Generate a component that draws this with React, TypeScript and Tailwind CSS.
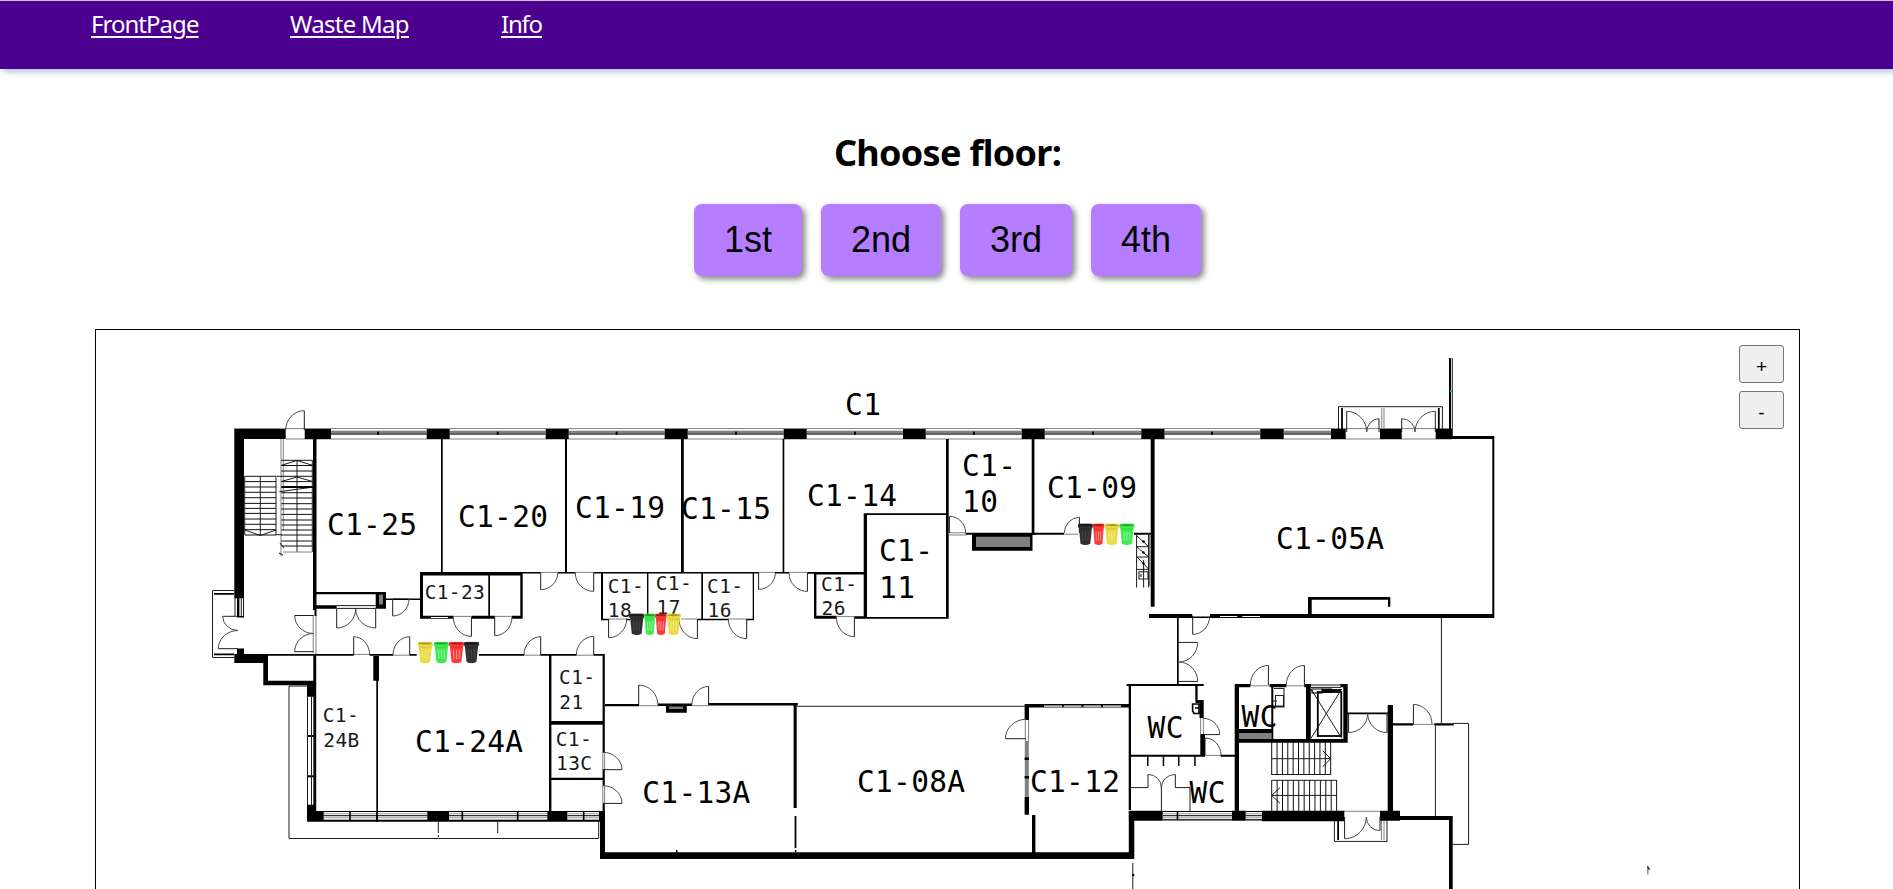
import React from "react";

type Box = [number, number, number, number];
type Swing = [number, number, number, number, number, number];

const INK = "#000000";
const GREY = "#808080";

/* Walls, given as left, top, right, bottom. */
const walls: Box[] = [
  // north facade piers
  [234.3, 429, 285.7, 439], [304.7, 429, 331, 439], [426.7, 429, 449.7, 439], [545.7, 429, 568.7, 439],
  [664.7, 429, 687.7, 439], [783.7, 429, 806.7, 439], [903, 429, 925.7, 439], [1021.7, 429, 1044.7, 439],
  [1141.3, 429, 1164.5, 439], [1260.3, 429, 1283.7, 439], [1331, 429, 1345.7, 439], [1380, 429, 1401.7, 439],
  [1435.7, 429, 1452.7, 439], [1452, 436, 1494.3, 439], [1492.3, 436, 1494.3, 618], [1149, 614, 1494.3, 618],
  [1449, 358, 1451, 429],
  // west wall and entrance
  [234.3, 429, 244, 598.3], [237, 598, 239.4, 616], [237, 616, 244, 617.5], [237, 648.5, 244, 654],
  [234.3, 654, 268, 663], [263.3, 654, 268, 685.3], [263.3, 680.7, 316, 685.3], [313.3, 655, 316, 683],
  [313, 439, 316.5, 610], [314.5, 609, 316.5, 616],
  // room partitions
  [441, 439, 442.7, 573], [565, 439, 567, 573], [681, 439, 683.8, 573], [782.6, 439, 784.3, 573],
  [946, 439, 948.7, 618.7], [1031.7, 439, 1034.4, 535], [1150.7, 439, 1154.6, 606.7],
  // service strip
  [316, 592, 386, 594.3], [375.7, 592, 386, 608.7], [316, 605.3, 336.7, 608.7], [386, 598.4, 420, 600],
  [420, 572, 522.7, 575.6], [420, 572, 423, 618.7], [520.3, 572, 522.7, 618.7], [488.3, 574, 490, 618],
  [420, 615.7, 453.3, 618.7], [471.7, 615.7, 494.7, 618.7], [512, 615.7, 522.7, 618.7],
  [522, 572, 540.7, 573.5], [557.7, 572, 575.3, 573.5], [593.7, 572, 758.7, 573.5], [775, 572, 789, 573.5], [807.3, 572, 864, 573.7],
  [601, 573, 603, 620.3], [647, 573, 648.4, 614], [701.3, 573, 703, 620], [752.7, 573, 754, 620],
  [601, 618.7, 609, 620.3], [626, 618.7, 630, 620.3], [697.3, 618.7, 728.3, 620.3], [746.7, 618.7, 754, 620.3],
  [814, 572.3, 816.4, 618.7], [814, 572.3, 866, 574.4], [814, 615.7, 836.3, 618.7], [854.7, 616.3, 866, 618.7],
  [863.7, 513.3, 867, 618.7], [863.7, 513.3, 948, 515], [863.7, 617, 948.7, 618.7],
  [965.7, 532.7, 1064, 534.7], [1134, 532.7, 1151, 534.7], [972, 533, 1032.5, 550.7],
  // corridor south side
  [268, 654, 353.7, 655.8], [369.7, 654, 393, 655.8], [409.7, 654, 416.7, 655.8], [479, 654, 524, 655.8],
  [540.7, 654, 576.3, 655.8], [593.7, 654, 604.8, 655.8], [313.6, 656, 316.2, 812],
  [373.3, 656, 379, 680.7], [376.3, 680, 378, 822], [549, 655, 551.4, 812], [602.6, 654, 604.8, 752.3],
  [602.6, 769.7, 604.8, 785.7], [602.6, 803.3, 604.8, 812], [551, 721, 603, 724.7], [551, 777.7, 603, 780],
  [307, 685, 316, 696.7], [307, 804.7, 316, 812], [307, 811, 323.7, 821.7], [427.3, 811, 449, 821.7], [547.3, 811, 567.3, 821.7],
  [599, 811, 605, 821.7], [307, 820.3, 600, 821.8], [307, 811, 600, 812],
  // lower rooms
  [605, 704, 639, 706.3], [658, 703.6, 692, 706], [708.6, 703, 797.8, 705.5], [666, 705, 686.8, 712.7],
  [793.6, 705, 796.7, 808], [794.6, 816, 796.4, 848], [794.8, 850, 796.4, 852], [676, 850, 677.4, 852.5],
  [600, 811, 605, 859], [600, 852.3, 1134.3, 859], [1128.8, 820, 1134.3, 859],
  [1024.6, 704, 1129.3, 707.6], [1024.6, 704, 1029, 720], [1024.6, 796.7, 1029, 814.7], [1032, 815, 1035.4, 853],
  [1128.7, 684, 1131, 810],
  // toilets
  [1126.7, 684, 1203.7, 686], [1195.3, 686, 1197.6, 700], [1195.5, 700, 1203.7, 703], [1199.5, 700, 1203.7, 718],
  [1200.3, 734, 1205, 756], [1131, 754.7, 1205, 756.7], [1220.7, 754.7, 1236, 756.7],
  [1147, 756, 1148.5, 766], [1162.7, 756, 1164.2, 766], [1178, 756, 1179.5, 766], [1194.2, 756, 1195.7, 766],
  [1177, 618, 1178.7, 684], [1128.7, 810.7, 1162.7, 820.7], [1232, 810.7, 1245.7, 820.7],
  [1262, 810.7, 1344.3, 821.3], [1380, 810.7, 1400, 820.7], [1400, 816, 1452.5, 820], [1449, 816, 1452.7, 889],
  [1234.7, 684, 1239, 811], [1234.7, 684, 1250.3, 687.2], [1269.7, 684, 1286.3, 687.2], [1304.3, 684, 1311, 687.2],
  [1340.5, 684, 1347.7, 687.2], [1271.3, 687, 1273.3, 740], [1306, 684, 1310.8, 740], [1343.3, 684, 1347.7, 742.6],
  [1239, 739, 1347.7, 742.7], [1239, 729, 1272, 733], [1322, 688.5, 1332, 693],
  [1347, 712.4, 1388, 714.2], [1387.7, 705, 1393, 811], [1393, 723.2, 1413.3, 725.6], [1434.3, 723.2, 1453.7, 725.6],
  [1308, 597, 1390.3, 599.7], [1308, 597, 1311.7, 616], [1388, 597, 1390.3, 606.7],
];

const greys: Box[] = [
  [379, 594.5, 383, 604.5], [976, 536.7, 1030, 547], [1239, 733, 1271.3, 739], [669, 706.5, 683, 709],
  [1024.8, 741, 1028.8, 796.7], [1148.3, 535, 1150.6, 586],
];

const whites: Box[] = [
  [1192.3, 614, 1210, 616.4], [1220, 616, 1237.3, 617], [1242.3, 616, 1260, 617], [431, 617, 448, 618],
  [1044, 705.6, 1062, 706.7], [1063.8, 705.6, 1081.6, 706.7], [1083.5, 705.6, 1101, 706.7], [1103, 705.6, 1121, 706.7],
];

/* Window bays of the north facade. */
const bays: [number, number, number | null][] = [
  [331, 426.7, 378], [449.7, 545.7, 497.7], [568.7, 664.7, 616.7], [687.7, 783.7, 736], [806.7, 903, 855],
  [925.7, 1021.7, 974], [1044.7, 1141.3, 1093], [1164.5, 1260.3, 1212], [1283.7, 1331, null],
];

/* Window bays of the south facade. */
const southBays: Box[] = [
  [323.7, 811, 427.3, 821], [449, 811, 547.3, 821], [567.3, 811, 599, 821], [1162.7, 811, 1232, 820.5], [1245.7, 811, 1262, 820.5],
];

/* Thin lines: x1, y1, x2, y2. */
const thin: Box[] = [
  [1452.3, 358, 1452.3, 429],
  [1338.5, 429, 1338.5, 406.7], [1338.5, 406.7, 1442.4, 406.7], [1442.4, 406.7, 1442.4, 429],
  [234, 590.5, 212.5, 590.5], [212.5, 590.5, 212.5, 657.5], [212.5, 657.5, 234, 657.5],
  [235, 598, 235, 616], [241.3, 598, 241.3, 616], [243.5, 598, 243.5, 616],
  [276, 476.3, 276, 535], [277, 476.3, 282, 476.3], [244.7, 476.3, 244.7, 535], [260.3, 476.3, 260.3, 535],
  [297, 460.3, 297, 552], [312.3, 460, 312.3, 552], [276, 534.7, 282, 534.7],
  [336.7, 605.6, 375.7, 605.6], [336.7, 608.4, 375.7, 608.4],
  [307.5, 696, 307.5, 805], [311.5, 696, 311.5, 805], [314, 696, 314, 805],
  [289, 686, 307, 686], [289, 686, 289, 838.5], [289, 838.5, 598.7, 838.5], [598.7, 838.5, 598.7, 821],
  [438.3, 822, 438.3, 833], [438.3, 835, 438.3, 837], [497.7, 822, 497.7, 833],
  [797, 706.3, 1025, 706.3], [1441.4, 618, 1441.4, 723.3],
  [1453, 723.4, 1468.6, 723.4], [1468.6, 723.4, 1468.6, 844.4], [1468.6, 844.4, 1452, 844.4], [1435.4, 725, 1435.4, 816],
  [1334.4, 821, 1334.4, 841.4], [1334.4, 841.4, 1387, 841.4], [1387, 841.4, 1387, 820],
  [1132.8, 863, 1132.8, 889], [1136.6, 535, 1136.6, 587.5], [1143.6, 560, 1143.6, 587.5], [1148.6, 535, 1148.6, 587.5],
  [1136.6, 546.7, 1149, 546.7], [1136.6, 557, 1149, 557], [1136.6, 569.4, 1149, 569.4],
  [1137, 536, 1148.6, 546.6], [1137, 547, 1148.6, 557], [1137, 557, 1148.6, 569],
  [1131, 787.6, 1148, 787.6], [1175.3, 787.6, 1190, 787.6], [1161.4, 786, 1161.4, 811], [1190, 787.6, 1190, 811],
  [1311, 685, 1341, 685], [1311, 687.4, 1341, 687.4], [1311, 689, 1341.7, 738.3], [1341.7, 689, 1311, 738.3],
  [1271.7, 774.5, 1330.7, 774.5], [1271.7, 758.7, 1330.7, 758.7], [1271.7, 780.3, 1336.7, 780.3], [1271.7, 795.4, 1336.7, 795.4],
  [1322.7, 750.7, 1330.7, 758.7], [1330.7, 758.7, 1322.7, 766.7], [1280, 787.7, 1271.7, 795.4], [1271.7, 795.4, 1280, 803.3],
  [244.7, 530, 260.3, 535.5], [260.3, 535.5, 276, 530], [281.3, 465.3, 297, 460.5], [297, 460.5, 312.5, 465.3],
  [281.3, 481.5, 297, 477], [297, 477, 312.5, 481.5], [279.3, 491.7, 312.5, 487.2],
];

const medium: Box[] = [
  [1342, 408, 1342, 429], [1438.8, 408, 1438.8, 429], [214, 593.8, 234, 593.8], [214, 654.4, 234, 654.4],
  [1338.1, 821, 1338.1, 840], [281.3, 487, 312.5, 487],
];

const faint: Box[] = [
  [234, 428.6, 1452, 428.6], [285.7, 439, 1452, 439], [281, 439, 281, 556], [283.3, 439, 283.3, 530],
  [313.2, 615, 313.2, 653], [316, 615, 316, 655], [392.7, 598.7, 409, 598.7], [540.7, 572.4, 557.7, 572.4],
  [575, 572.4, 594, 572.4], [758, 572.4, 775, 572.4], [789, 572.4, 807, 572.4], [453, 616.4, 472, 616.4], [494, 616.4, 512, 616.4],
  [609, 619, 627, 619], [681, 619, 697, 619], [728, 619, 747, 619], [836, 616.6, 855, 616.6],
  [353, 654.4, 370, 654.4], [393, 655.2, 410, 655.2], [524, 655.2, 541, 655.2], [576, 655.2, 594, 655.2],
  [949, 532.8, 966, 532.8], [949, 535, 966, 535], [1064, 534.2, 1078, 534.2], [639, 705.7, 658, 705.7], [692, 705.7, 709, 705.7],
  [602.8, 752, 602.8, 770], [604.6, 752, 604.6, 770], [602.8, 785, 602.8, 803], [604.6, 785, 604.6, 803],
  [1025.3, 719, 1025.3, 741], [1028.6, 719, 1028.6, 741], [1250, 685.8, 1270, 685.8], [1286, 685.8, 1304, 685.8],
  [1413, 724.4, 1434, 724.4], [1344, 811.3, 1380, 811.3], [1381.8, 408, 1381.8, 428], [1384, 408, 1384, 428],
  [1381.5, 820, 1381.5, 840], [1384, 820, 1384, 840], [1205, 755.4, 1221, 755.4], [1200.6, 718, 1200.6, 734], [1203.4, 718, 1203.4, 734],
];

/* Door swings: hinge, leaf tip, closed position. */
const doors: Swing[] = [
  [304.3, 430, 304.3, 410.7, 285.7, 430],
  [1346.7, 432, 1346.7, 411.3, 1366.7, 432], [1379, 432, 1379, 418.7, 1366.7, 432],
  [1401.7, 432, 1401.7, 418.7, 1415, 432], [1435.3, 432, 1435.3, 411.3, 1415, 432],
  [238, 616.3, 222.7, 616.3, 238, 630.5], [238, 648.7, 218.3, 648.7, 238, 630.5],
  [313.5, 615.5, 294.7, 615.5, 313.5, 633.5], [313.5, 651.7, 294.7, 651.7, 313.5, 633.5],
  [336.7, 608.7, 336.7, 628, 355.7, 608.7], [375.7, 608.7, 375.7, 628, 355.7, 608.7],
  [392.7, 599, 392.7, 616, 409, 599], [471.4, 617, 471.4, 636.4, 453.3, 617], [494.7, 617, 494.7, 635.7, 512, 617],
  [540.7, 573, 540.7, 589.7, 557.7, 573], [593.7, 573, 593.7, 591.4, 575.3, 573],
  [758.6, 573, 758.6, 589.4, 775.3, 573], [807.4, 573, 807.4, 591.4, 789, 573],
  [608.6, 619, 608.6, 637.7, 626.7, 619], [697.4, 619, 697.4, 638.7, 679, 619], [746.7, 619, 746.7, 638.7, 728.3, 619],
  [854.4, 617, 854.4, 636.7, 836.3, 617], [949.4, 533, 949.4, 516.3, 965.7, 533], [1079.4, 533, 1079.4, 517.3, 1064.3, 533],
  [353.7, 655, 353.7, 636.7, 369.7, 655], [409.7, 655, 409.7, 636.7, 393, 655],
  [540.7, 655, 540.7, 636.7, 524, 655], [593.7, 655, 593.7, 636.4, 576.3, 655],
  [603, 769.7, 622, 769.7, 603, 752.3], [603, 803.4, 622, 803.4, 603, 785.7],
  [638.7, 705, 638.7, 685, 657.9, 705], [708.6, 705, 708.6, 686.4, 691.8, 705], [1026, 738.7, 1005.4, 738.7, 1026, 719.3],
  [1192.7, 616, 1192.7, 634.4, 1209.7, 616],
  [1178.7, 642.4, 1197.7, 642.4, 1178.7, 662], [1178.7, 681.4, 1197.7, 681.4, 1178.7, 662],
  [1203, 734.6, 1219.7, 734.6, 1203, 718.3], [1205, 755, 1205, 738, 1221, 755],
  [1148, 787.6, 1148, 774.4, 1161.4, 787.6], [1175.3, 787.6, 1175.3, 774.4, 1161.4, 787.6],
  [1268.4, 685, 1268.4, 665.4, 1250.3, 685], [1304.4, 685, 1304.4, 665.4, 1286.3, 685],
  [1348.6, 713.5, 1348.6, 732.6, 1367.7, 713.5], [1387, 713.5, 1387, 732.6, 1367.7, 713.5],
  [1413.4, 724, 1413.4, 704.4, 1432, 724],
  [1344.6, 817, 1344.6, 838.7, 1366.3, 817], [1380, 817, 1380, 830.7, 1366.3, 817],
];

type Label = [string, number, number];

const bigLabels: Label[] = [
  ["C1-25", 327, 535], ["C1-20", 458, 527], ["C1-19", 575, 517.7], ["C1-15", 681, 519], ["C1-14", 807, 506],
  ["C1", 845, 414.7], ["C1-", 879, 561], ["11", 879, 598], ["C1-", 962, 475.3], ["10", 962, 512],
  ["C1-09", 1047, 497.7], ["C1-05A", 1276, 549], ["C1-24A", 415, 752], ["C1-13A", 642.3, 802.7],
  ["C1-08A", 857, 791.7], ["C1-12", 1030, 791.3], ["WC", 1147.6, 737.3], ["WC", 1241.6, 726.3], ["WC", 1189.4, 802.3],
];

const smallLabels: Label[] = [
  ["C1-23", 424.7, 599.3], ["C1-", 607.7, 593.3], ["18", 607.7, 616.7], ["C1-", 655.7, 589.7], ["17", 656.5, 613.7],
  ["C1-", 707, 592.7], ["16", 707.5, 616.7], ["C1-", 821, 590.7], ["26", 821.5, 615], ["C1-", 322.7, 722.3], ["24B", 323.3, 747],
  ["C1-", 559, 684.3], ["21", 559.3, 709], ["C1-", 555.7, 745.7], ["13C", 556, 770],
];

const YELLOW = ["#eadb45", "#a79a22", "#f6ee9a"];
const GREEN = ["#3fea4c", "#1ea52b", "#a8f8ae"];
const RED = ["#fb3a3a", "#b01c1c", "#fdaaaa"];
const BLACK = ["#303030", "#161616", "#4a4a4a"];

const bins: [number, number, number, string[]][] = [
  [417.5, 641.6, 15.4, YELLOW], [433.7, 641.6, 15.4, GREEN], [448.8, 641.6, 15.4, RED], [463.8, 641.6, 15.4, BLACK],
  [629, 613.3, 15.4, BLACK], [643.8, 613.3, 12, GREEN], [655, 613.3, 12, RED], [666.2, 613.3, 14.8, YELLOW],
  [1077.8, 523.3, 15.2, BLACK], [1092.4, 523.3, 12.2, RED], [1104.2, 523.3, 15.2, YELLOW], [1119.2, 523.3, 15.4, GREEN],
];

function swingPath([hx, hy, ax, ay, bx, by]: Swing) {
  const rx = Math.max(Math.abs(ax - hx), Math.abs(bx - hx));
  const ry = Math.max(Math.abs(ay - hy), Math.abs(by - hy));
  const sweep = (ax - hx) * (by - hy) - (ay - hy) * (bx - hx) > 0 ? 1 : 0;
  return { leaf: `M${hx} ${hy}L${ax} ${ay}`, arc: `M${ax} ${ay}A${rx} ${ry} 0 0 ${sweep} ${bx} ${by}` };
}

const linePath = (list: Box[]) => list.map(([a, b, c, d]) => `M${a} ${b}L${c} ${d}`).join("");
const boxPath = (list: Box[]) => list.map(([a, b, c, d]) => `M${a} ${b}H${c}V${d}H${a}Z`).join("");

const rightTreads = [460.3, 465.5, 471, 476.3, 481.6, 492.7, 498, 503.7, 509, 514.4, 520, 525, 530, 535, 541, 546];
const leftTreads = [476.3, 481.6, 487, 492.3, 497.7, 503.4, 508.4, 513.4, 519, 524.3, 529.7, 535];

function Bin({ x, y, w, tone }: { x: number; y: number; w: number; tone: string[] }) {
  const [base, dark, light] = tone;
  return (
    <svg x={x} y={y} width={w} height={22} viewBox="0 0 15 21.5" preserveAspectRatio="none">
      <path d="M0.9 3L2.7 20Q7.5 22.4 12.3 20L14.1 3Z" fill={base} />
      <rect x={0} y={0.2} width={15} height={4.4} rx={1.8} fill={base} />
      <ellipse cx={7.5} cy={1.8} rx={6.4} ry={1} fill={dark} />
      <path d="M4.5 8L5.1 17M7.5 8V17M10.5 8L9.9 17" stroke={light} strokeWidth={0.8} fill="none" />
      <path d="M1.6 5.2Q7.5 6.4 13.4 5.2" stroke={dark} strokeWidth={0.5} strokeOpacity={0.6} fill="none" />
    </svg>
  );
}

function FloorPlan() {
  const swings = doors.map(swingPath);
  return (
    <svg className="block h-[559px] w-[1703px]" viewBox="96 330 1703 559">
      <path d={linePath(faint)} stroke={GREY} strokeWidth={1} fill="none" />
      {bays.map(([a, b, tick]) => (
        <g key={a}>
          <rect x={a} y={430.7} width={b - a} height={3} fill={GREY} />
          <rect x={a} y={433.6} width={b - a} height={1} fill={INK} />
          {tick && <rect x={tick - 1} y={431.7} width={2} height={3} fill={INK} />}
        </g>
      ))}
      {southBays.map(([a, b, c, d]) => (
        <g key={a}>
          <rect x={a} y={b} width={c - a} height={1} fill={INK} />
          <rect x={a} y={b + 2.4} width={c - a} height={0.8} fill={GREY} />
          <rect x={a} y={b + 4.2} width={c - a} height={1} fill={INK} />
          <rect x={a} y={b + 6.4} width={c - a} height={0.8} fill={GREY} />
          <rect x={a} y={d - 1.3} width={c - a} height={1.3} fill={INK} />
        </g>
      ))}
      {[350, 377, 462.3, 517.7, 583.7, 1177.5].map((x) => (
        <rect key={x} x={x - 0.8} y={811} width={1.6} height={9} fill={INK} />
      ))}
      {[736, 776.3].map((y) => (
        <rect key={y} x={307} y={y - 1} width={9} height={2} fill={INK} />
      ))}
      <path d={boxPath(walls)} fill={INK} />
      <path d={boxPath(greys)} fill={GREY} />
      <path d={boxPath(whites)} fill="#ffffff" />
      {[758.7, 777.3].map((y) => (
        <rect key={y} x={1024.6} y={y - 1.2} width={4.4} height={2.4} fill={INK} />
      ))}
      <path d={linePath(thin)} stroke="#1c1c1c" strokeWidth={1} fill="none" />
      <path d={linePath(medium)} stroke={INK} strokeWidth={1.8} fill="none" />
      <path d={swings.map((s) => s.leaf).join("")} stroke="#1c1c1c" strokeWidth={1} fill="none" />
      <path d={swings.map((s) => s.arc).join("")} stroke="#4a4a4a" strokeWidth={1} fill="none" />
      <path
        d={rightTreads.map((y) => `M281.3 ${y}H312.5`).join("") + leftTreads.map((y) => `M244.7 ${y}H276`).join("")}
        stroke="#111111"
        strokeWidth={1}
        fill="none"
      />
      <path d="M283 552H312.5" stroke={GREY} strokeWidth={1} />
      <path d="M280 543L284 548M279 553L283 555" stroke="#333333" strokeWidth={1.2} />
      <path
        d={
          Array.from({ length: 12 }, (_, i) => `M${1271.7 + i * 5.36} 742V775`).join("") +
          Array.from({ length: 13 }, (_, i) => `M${1271.7 + i * 5.41} 780V811`).join("")
        }
        stroke="#111111"
        strokeWidth={1}
        fill="none"
      />
      <rect x={1317.8} y={692} width={23.5} height={44} fill="none" stroke={INK} strokeWidth={1.8} />
      <rect x={1312} y={689} width={10} height={4} fill="none" stroke={INK} strokeWidth={1} />
      <path d="M1332 690.3H1341" stroke={INK} strokeWidth={2.4} />
      <path d="M1274 688.5H1284V707H1273.5M1275.5 695.5H1283.5V706H1275.5ZM1273 701H1277" stroke="#222222" strokeWidth={1.1} fill="none" />
      <path d="M1192.6 704H1199V713.5H1194L1192.6 711ZM1195 708H1199" stroke={INK} strokeWidth={1.6} fill="none" />
      <path d="M1139 571.8H1148V579H1139ZM1141 574V577" stroke="#222222" strokeWidth={1.1} fill="none" />
      <circle cx={1143.5} cy={541.5} r={1.2} />
      <circle cx={1143.5} cy={552.5} r={1.2} />
      <circle cx={1143.5} cy={563.5} r={1.2} />
      <circle cx={1133.2} cy={875} r={1.2} />
      <rect x={1450} y={390} width={2} height={2} fill="#1fae54" />
      <path d="M1647.8 866V874.5" stroke="#888888" strokeWidth={1.4} />
      <path d="M1647 865.4L1650.6 869.5L1648 869.5Z" fill="#222222" />
      {bigLabels.map(([t, x, y]) => (
        <text
          key={`${x}-${y}`}
          x={x}
          y={y + 0.3}
          textLength={t.length * 18}
          className="fill-black font-['DejaVu_Sans_Mono',monospace] text-[29.5px]"
        >
          {t}
        </text>
      ))}
      {smallLabels.map(([t, x, y]) => (
        <text
          key={`${x}-${y}`}
          x={x}
          y={y}
          textLength={t.length * 12}
          className="fill-[#1a1a1a] font-['DejaVu_Sans_Mono',monospace] text-[19.5px]"
        >
          {t}
        </text>
      ))}
      {bins.map(([x, y, w, tone]) => (
        <Bin key={x} x={x} y={y} w={w} tone={tone} />
      ))}
    </svg>
  );
}

export default function App() {
  return (
    <div className="flex h-screen flex-col overflow-hidden bg-white font-['Noto_Sans','Open_Sans',sans-serif] text-black">
      <header className="relative h-[69px] shrink-0 border-t border-[#c8c8c8] bg-[#4d008f] shadow-[3px_3px_6px_#b0c4de]">
        <nav className="flex gap-[91px] pl-[91px] pt-[7px] text-[24px] leading-[32px] text-white">
          <a href="#front" className="w-[108px] whitespace-nowrap tracking-[-0.97px] underline decoration-2 underline-offset-[3px]">FrontPage</a>
          <a href="#map" className="w-[120px] whitespace-nowrap tracking-[-0.7px] underline decoration-2 underline-offset-[3px]">Waste Map</a>
          <a href="#info" className="whitespace-nowrap tracking-[-1.2px] underline decoration-2 underline-offset-[3px]">Info</a>
        </nav>
      </header>
      <main className="flex flex-col items-center pl-[2px]">
        <h1 className="mt-[60px] text-[36px] font-bold leading-[48px] tracking-[-0.7px]">Choose floor:</h1>
        <div className="mt-[27px] flex gap-[19px]">
          {["1st", "2nd", "3rd", "4th"].map((floor) => (
            <button
              key={floor}
              className="h-[72px] rounded-[8px] bg-[#b57dff] px-[30px] font-['Liberation_Sans',sans-serif] text-[36px] leading-[42px] shadow-[3px_3px_6px_#808080]"
            >
              {floor}
            </button>
          ))}
        </div>
        <section className="relative mt-[53px] h-[700px] w-[1705px] shrink-0 border border-black">
          <FloorPlan />
          <div className="absolute right-[15px] top-[15px] flex flex-col gap-[8px]">
            {["+", "-"].map((sign) => (
              <button
                key={sign}
                className="h-[38px] w-[45px] rounded-[3px] border border-[#767676] bg-[#efefef] pt-[5px] font-['Liberation_Sans',sans-serif] text-[19px] leading-[20px]"
              >
                {sign}
              </button>
            ))}
          </div>
        </section>
      </main>
    </div>
  );
}
